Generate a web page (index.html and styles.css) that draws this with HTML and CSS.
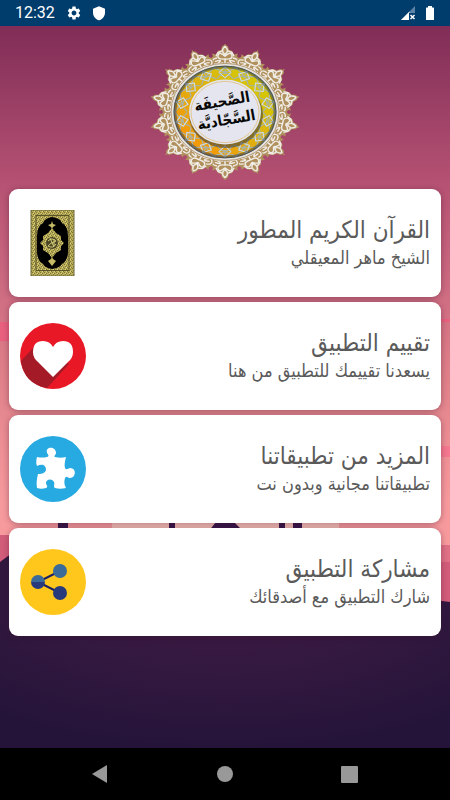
FILE: index.html
```html
<!DOCTYPE html>
<html lang="ar">
<head>
    <meta charset="UTF-8">
    <meta name="viewport" content="width=device-width, initial-scale=1.0">
    <title>الصحيفة السجادية</title>
    <link rel="stylesheet" href="styles.css">
</head>
<body>
    <header class="status-bar">
        <span class="clock">12:32</span>
        <svg class="status-icon" viewBox="0 0 24 24" fill="#fff"><path d="M19.14 12.94c.04-.3.06-.61.06-.94 0-.32-.02-.64-.07-.94l2.03-1.58c.18-.14.23-.41.12-.61l-1.92-3.32c-.12-.22-.37-.29-.59-.22l-2.39.96c-.5-.38-1.03-.7-1.62-.94l-.36-2.54c-.04-.24-.24-.41-.48-.41h-3.84c-.24 0-.43.17-.47.41l-.36 2.54c-.59.24-1.13.57-1.62.94l-2.39-.96c-.22-.08-.47 0-.59.22L2.74 8.87c-.12.21-.08.47.12.61l2.03 1.58c-.05.3-.09.63-.09.94s.02.64.07.94l-2.03 1.58c-.18.14-.23.41-.12.61l1.92 3.32c.12.22.37.29.59.22l2.39-.96c.5.38 1.03.7 1.62.94l.36 2.54c.05.24.24.41.48.41h3.84c.24 0 .44-.17.47-.41l.36-2.54c.59-.24 1.13-.56 1.62-.94l2.39.96c.22.08.47 0 .59-.22l1.92-3.32c.12-.22.07-.47-.12-.61l-2.01-1.58zM12 15.6c-1.98 0-3.6-1.62-3.6-3.6s1.62-3.6 3.6-3.6 3.6 1.62 3.6 3.6-1.62 3.6-3.6 3.6z"/></svg>
        <svg class="status-icon" viewBox="0 0 24 24" fill="#fff"><path d="M12 2 3 5.500v6C3 17 7 21.500 12 23c5-1.500 9-6 9-11.500v-6z"/></svg>
        <span class="spacer"></span>
        <svg class="status-icon" viewBox="0 0 16 16">
            <path d="M15 1v14H1z" fill="#5b83a6"/>
            <path d="M9.500 6.500V15H1z" fill="#fff"/>
            <path d="M9 8h7v8H9z" fill="#003c6c"/>
            <path d="m10.500 10 4 4m0-4-4 4" stroke="#fff" stroke-width="1.500"/>
        </svg>
        <svg class="battery" viewBox="0 0 10 16"><path d="M3 1h4v1.500h1.500q.5 0 .5.500v11.500q0 .5-.5.500h-7q-.5 0-.5-.5V3q0-.5.5-.5H3z" fill="#fff"/></svg>
    </header>

    <main class="screen">
        <svg class="scenery" viewBox="0 0 450 722" preserveAspectRatio="none" aria-hidden="true">
            <defs>
                <linearGradient id="sky" x2="0" y2="1">
                    <stop offset="0" stop-color="#802d57"/>
                    <stop offset=".22" stop-color="#b65273"/>
                    <stop offset=".38" stop-color="#d06e83"/>
                    <stop offset=".48" stop-color="#df8089"/>
                    <stop offset=".66" stop-color="#f79a9d"/>
                </linearGradient>
                <radialGradient id="ground" cx=".5" cy=".2" r=".8">
                    <stop offset="0" stop-color="#3f1a42"/>
                    <stop offset=".55" stop-color="#32183f"/>
                    <stop offset="1" stop-color="#251439"/>
                </radialGradient>
            </defs>
            <path d="M0 0h450v722H0z" fill="url(#sky)"/>
            <path d="M0 296h40v19H0zM410 293h40v3h-40z" fill="#e9607e"/>
            <path d="M420 420h30v11h-30z" fill="#f4788f"/>
            <path d="M112 480h227v30H112z" fill="#f8c1b8"/>
            <path d="M0 509h60v80H0zM390 519h60v80h-60z" fill="#d25d7a"/>
            <path d="M400 519h50v17h-50z" fill="#df7085"/>
            <path d="M58 488h10v40H58zM169 488h6v40h-6zM279 488h6v40h-6zM293 488h9v40h-9zM208 506l8-10h18l10 10z" fill="#35154a"/>
            <path d="M0 536l12-9h400l22 47 16 2v146H0z" fill="url(#ground)"/>
        </svg>

        <svg class="emblem" viewBox="0 0 150 136" role="img" aria-label="الصحيفة السجادية">
            <defs>
                <linearGradient id="gold" x1="1" x2="0" y1="0" y2="1">
                    <stop offset="0" stop-color="#cfd400"/>
                    <stop offset=".5" stop-color="#dfb010"/>
                    <stop offset="1" stop-color="#ff8c05"/>
                </linearGradient>
                <g id="petal">
                    <path d="M-14-53v-7l2-2-1-3 4 1 2-4 3-1 1-4 3-2 3 2 1 4 3 1 2 4 4-1-1 3 2 2v7z" fill="#b0905c"/>
                    <path d="M0-76v6" stroke="#b3976c"/>
                    <g fill="none" stroke="#f0ece6" stroke-width="1.500">
                        <path d="M0-73q-5 5 0 9 5-4 0-9M0-62q-6-6-7-1t7 4q8 1 7-4t-7 1M0-59v8"/>
                        <path d="M-8-60q-6 1-4 5t6 0-4-1M8-60q6 1 4 5t-6 0 4-1M-6-52q3-5 6 0 3-5 6 0M-3-68l-4 2-2 4M3-68l4 2 2 4"/>
                    </g>
                </g>
                <g id="tracery" fill="none" stroke="#aab3a6" stroke-width="1.300">
                    <path d="M0-50 6-44 0-38-6-44zM0-44 11-49M0-44-11-49M-8-37-3-43H3l5 6M0-50v5"/>
                    <path d="M0-50 6-44 0-38-6-44z" stroke="#dadfd9" stroke-width="1"/>
                </g>
            </defs>
            <g transform="translate(75 68) scale(1 .9)">
                <use href="#petal"/>
                <use href="#petal" transform="rotate(25.714)"/>
                <use href="#petal" transform="rotate(51.429)"/>
                <use href="#petal" transform="rotate(77.143)"/>
                <use href="#petal" transform="rotate(102.857)"/>
                <use href="#petal" transform="rotate(128.571)"/>
                <use href="#petal" transform="rotate(154.286)"/>
                <use href="#petal" transform="rotate(180)"/>
                <use href="#petal" transform="rotate(205.714)"/>
                <use href="#petal" transform="rotate(231.429)"/>
                <use href="#petal" transform="rotate(257.143)"/>
                <use href="#petal" transform="rotate(282.857)"/>
                <use href="#petal" transform="rotate(308.571)"/>
                <use href="#petal" transform="rotate(334.286)"/>
                <circle r="54" fill="#e6e2de" stroke="#b39a75"/>
                <circle r="51" fill="url(#gold)" stroke="#5b6269"/>
                <use href="#tracery"/>
                <use href="#tracery" transform="rotate(25.714)"/>
                <use href="#tracery" transform="rotate(51.429)"/>
                <use href="#tracery" transform="rotate(77.143)"/>
                <use href="#tracery" transform="rotate(102.857)"/>
                <use href="#tracery" transform="rotate(128.571)"/>
                <use href="#tracery" transform="rotate(154.286)"/>
                <use href="#tracery" transform="rotate(180)"/>
                <use href="#tracery" transform="rotate(205.714)"/>
                <use href="#tracery" transform="rotate(231.429)"/>
                <use href="#tracery" transform="rotate(257.143)"/>
                <use href="#tracery" transform="rotate(282.857)"/>
                <use href="#tracery" transform="rotate(308.571)"/>
                <use href="#tracery" transform="rotate(334.286)"/>
                <circle r="50" fill="none" stroke="#2c3a4a" stroke-opacity=".5" stroke-width="3"/>
                <circle cx="1" cy="3" r="37" fill="#35383c" opacity=".55"/>
                <circle r="36" fill="#e4e5ee"/>
                <circle r="34" fill="none" stroke="#e1c58c"/>
            </g>
            <g class="emblem-text" transform="rotate(-10 75 68)">
                <text x="74" y="62">الصَّحيفَة</text>
                <text x="75" y="81">السَّجّاديَّة</text>
            </g>
        </svg>

        <nav class="cards" dir="rtl">
            <a class="card" href="#quran">
                <div class="card-text">
                    <h2>القرآن الكريم المطور</h2>
                    <p>الشيخ ماهر المعيقلي</p>
                </div>
                <svg class="card-icon" viewBox="0 0 66 66">
                    <defs>
                        <pattern id="ornament" width="4" height="4" patternUnits="userSpaceOnUse">
                            <path d="M0 0h4v4H0z" fill="#b9ac57"/>
                            <path d="M1 0h1v1H1zM3 1h1v1H3zM0 2h1v1H0zM2 3h1v1H2z" fill="#7d743a"/>
                            <path d="M2 1h1v1H2zM1 3h1v1H1z" fill="#ded584"/>
                        </pattern>
                    </defs>
                    <path d="M11 0h43v66H11z" fill="url(#ornament)" stroke="#6d6636"/>
                    <path d="M16 5.500h33v55H16z" fill="none" stroke="#5a5429"/>
                    <path d="M17 26q0-10 6-13 2-5 9-6 8 1 10 6 6 3 6 13v15q0 10-6 13-2 4-10 5-7-1-9-5-6-3-6-13z" fill="#000"/>
                    <path d="M32 18l4 5 5 3v4l3 3-3 3v4l-5 3-4 5-4-5-5-3v-4l-3-3 3-3v-4l5-3z" fill="url(#ornament)"/>
                    <path d="m32 11 1 3 3 1-3 2-1 2-1-2-3-2 3-1zM32 47l1 2 3 2-4 5-4-5 3-2z" fill="#c6bb66"/>
                    <circle cx="32" cy="33" r="6" fill="#4b4827"/>
                    <path d="M28 31q4-4 8 0-6 2-8 5 5 3 8-2M30 28l4 9M34 29v7" fill="none" stroke="#d5ca76"/>
                </svg>
            </a>
            <a class="card" href="#rate">
                <div class="card-text">
                    <h2>تقييم التطبيق</h2>
                    <p>يسعدنا تقييمك للتطبيق من هنا</p>
                </div>
                <svg class="card-icon" viewBox="0 0 66 66">
                    <circle cx="33" cy="33" r="33" fill="#e81826"/>
                    <path d="M14 24 1 38q3 23 26 27l22-24z" fill="#a51a27"/>
                    <path d="M33 54 18 39q-5-4-5-10 0-11 10-11 7 0 10 6 3-6 10-6 10 0 10 11 0 6-5 10z" fill="#fff"/>
                </svg>
            </a>
            <a class="card" href="#more">
                <div class="card-text">
                    <h2>المزيد من تطبيقاتنا</h2>
                    <p>تطبيقاتنا مجانية وبدون نت</p>
                </div>
                <svg class="card-icon" viewBox="0 0 66 66">
                    <circle cx="33" cy="33" r="33" fill="#27a9e1"/>
                    <path d="M17 21q5 1 10 0 3-1 0-4c-2-7 9-7 9 0 0 2-3 3-1 4 4 1 7 1 11 0-1 4-2 8-1 11 2 3 3 0 5 0 7 0 6 10 0 10-2 0-3-3-5 0-1 3-1 7 1 10-4 1-8 1-11 0-2-1 0-4-1-6-2-4-8-3-8 1 0 2 3 4 0 5-3 1-6 1-9 0-1-5 0-10 1-14 2 0 7 0 8-4 0-6-5-6-9-4-1-2-1-6 0-9z" fill="#fff"/>
                </svg>
            </a>
            <a class="card" href="#share">
                <div class="card-text">
                    <h2>مشاركة التطبيق</h2>
                    <p>شارك التطبيق مع أصدقائك</p>
                </div>
                <svg class="card-icon" viewBox="0 0 66 66">
                    <circle cx="33" cy="33" r="33" fill="#ffc71c"/>
                    <path d="m40 22-22 11 22 11" fill="none" stroke="#1b1e62" stroke-width="2"/>
                    <circle cx="40" cy="22" r="7" fill="#3a6b99"/>
                    <circle cx="40" cy="44" r="7" fill="#293a7c"/>
                    <path d="M11 33a7 7 0 0 1 14 0z" fill="#3a6b99"/>
                    <path d="M11 33a7 7 0 0 0 14 0z" fill="#293a7c"/>
                </svg>
            </a>
        </nav>
    </main>

    <footer class="nav-bar">
        <button type="button" aria-label="رجوع"><svg viewBox="0 0 20 20"><path d="M17 1v18L2 10z" fill="#999"/></svg></button>
        <button type="button" aria-label="الرئيسية"><svg viewBox="0 0 20 20"><circle cx="10" cy="10" r="8" fill="#999"/></svg></button>
        <button type="button" aria-label="التطبيقات الأخيرة"><svg viewBox="0 0 20 20"><rect x="1" y="2" width="17" height="17" rx="1" fill="#999"/></svg></button>
    </footer>
</body>
</html>
```

FILE: styles.css
```css
* {
    box-sizing: border-box;
}

body {
    margin: 0;
    min-height: 100vh;
    display: flex;
    flex-direction: column;
    font-family: 'DejaVu Sans Condensed', 'DejaVu Sans', sans-serif;
    background-color: #000;
}

.status-bar {
    display: flex;
    align-items: center;
    gap: 9px;
    height: 26px;
    padding: 0 15px 0 15px;
    background-color: #003c6c;
}

.clock {
    color: #fff;
    font-family: Roboto, sans-serif;
    font-size: 16px;
    line-height: 28px;
    margin-right: 2px;
}

.status-icon {
    width: 16px;
    height: 16px;
}

.battery {
    width: 10px;
    height: 16px;
}

.spacer {
    flex: 1;
}

.screen {
    position: relative;
    flex: 1;
    display: flex;
    flex-direction: column;
    align-items: center;
    padding: 18px 9px;
    overflow: hidden;
}

.scenery {
    position: absolute;
    top: 0;
    left: 0;
    width: 100%;
    height: 100%;
}

.emblem {
    position: relative;
    width: 150px;
    height: 136px;
    margin-bottom: 9px;
}

.emblem-text {
    fill: #080808;
    font-size: 15px;
    font-weight: bold;
    text-anchor: middle;
}

.cards {
    position: relative;
    width: 100%;
    display: flex;
    flex-direction: column;
    gap: 5px;
}

.card {
    display: flex;
    align-items: center;
    justify-content: space-between;
    min-height: 108px;
    padding: 8px 11px;
    background-color: #fff;
    border-radius: 9px;
    box-shadow: 0 1px 6px rgba(60, 20, 45, 0.4);
    color: #5a5a5a;
    text-decoration: none;
}

.card h2 {
    margin: 0;
    font-size: 24px;
    font-weight: normal;
    line-height: 30px;
}

.card p {
    margin: 0;
    font-size: 18px;
    line-height: 26px;
}

.card-icon {
    width: 66px;
    height: 66px;
    flex-shrink: 0;
}

.nav-bar {
    display: flex;
    align-items: center;
    justify-content: space-around;
    height: 52px;
    padding: 0 37px;
    background-color: #000;
}

.nav-bar button {
    display: flex;
    justify-content: center;
    width: 20px;
    padding: 0;
    border: none;
    background: none;
    cursor: pointer;
}

.nav-bar svg {
    width: 20px;
    height: 20px;
    flex-shrink: 0;
}
```
